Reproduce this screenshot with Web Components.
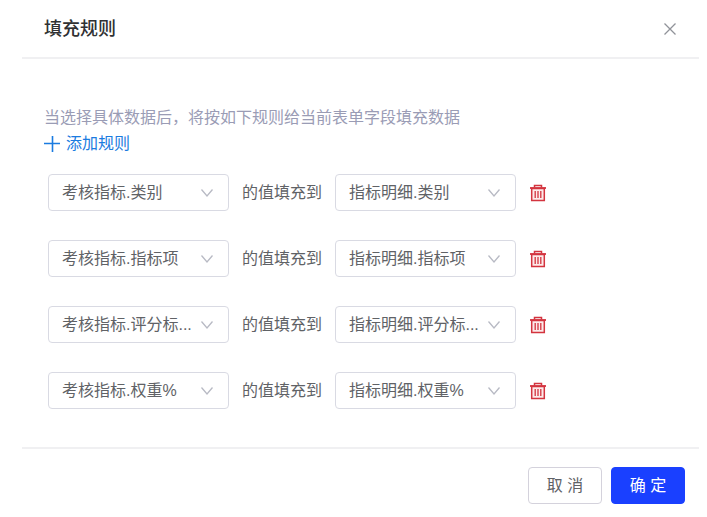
<!DOCTYPE html>
<html lang="zh-CN">
<head>
<meta charset="utf-8">
<meta name="viewport" content="width=device-width, initial-scale=1">
<title>填充规则</title>
<style>
body {
  margin: 0;
  background: #fff;
  color: #606266;
  font: 16px/24px "Liberation Sans", "Noto Sans CJK SC", sans-serif;
}
</style>
</head>
<body>
<fill-dialog>
  <span slot="title">填充规则</span>
  <rule-list>
    <span slot="hint">当选择具体数据后，将按如下规则给当前表单字段填充数据</span>
    <fill-rule from="考核指标.类别" to="指标明细.类别"></fill-rule>
    <fill-rule from="考核指标.指标项" to="指标明细.指标项"></fill-rule>
    <fill-rule from="考核指标.评分标..." to="指标明细.评分标..."></fill-rule>
    <fill-rule from="考核指标.权重%" to="指标明细.权重%"></fill-rule>
  </rule-list>
  <dialog-button slot="footer">取 消</dialog-button>
  <dialog-button slot="footer" primary>确 定</dialog-button>
</fill-dialog>

<script>
// parse each template once and clone it per element
const makeTemplate = (style, html) => {
  const tmpl = document.createElement("template");
  tmpl.innerHTML = `<style>${style}</style>${html}`;
  return tmpl;
};

const dialogTmpl = makeTemplate(
  `
:host {
  display: block;
  margin: 0 8px 0 22px;
}

header {
  display: flex;
  align-items: center;
  justify-content: space-between;
  height: 57px;
  padding: 0 22px;
  border-bottom: 2px solid #f0f0f2;
}

h1 {
  margin: 0;
  color: #303133;
  font-size: 18px;
  line-height: 24px;
  font-weight: 500;
}

.close {
  display: flex;
  padding: 0;
  border: 0;
  background: none;
  color: #909399;
  cursor: pointer;
}

main {
  padding: 47px 22px 38px;
}

footer {
  display: flex;
  justify-content: flex-end;
  gap: 9px;
  padding: 18px 14px 12px;
  border-top: 2px solid #f0f0f2;
}
`,
  `
<header>
  <h1><slot name="title"></slot></h1>
  <button class="close" type="button" aria-label="关闭">
    <svg width="14" height="14" viewBox="0 0 14 14" fill="none" stroke="currentColor" stroke-width="1.3"><path d="M1.5 1.5l11 11M12.5 1.5l-11 11"/></svg>
  </button>
</header>
<main><slot></slot></main>
<footer><slot name="footer"></slot></footer>
`
);

class FillDialog extends HTMLElement {
  constructor() {
    super();
    this.attachShadow({ mode: "open" }).appendChild(
      dialogTmpl.content.cloneNode(true)
    );
    this.shadowRoot
      .querySelector(".close")
      .addEventListener("click", () => this.remove());
  }
}

const listTmpl = makeTemplate(
  `
:host {
  display: block;
}

p {
  margin: 0;
  color: #9a9cb5;
  line-height: 24px;
}

.add {
  display: flex;
  align-items: center;
  gap: 6px;
  height: 28px;
  padding: 0;
  border: 0;
  background: none;
  color: #1a7be0;
  font: inherit;
  cursor: pointer;
}

.rules {
  display: flex;
  flex-direction: column;
  gap: 29px;
  padding: 16px 4px 0;
}
`,
  `
<p><slot name="hint"></slot></p>
<button class="add" type="button">
  <svg width="16" height="16" viewBox="0 0 16 16" fill="none" stroke="currentColor" stroke-width="1.6" aria-hidden="true"><path d="M0 7.5h16M8.5 0v16"/></svg>
  <span>添加规则</span>
</button>
<div class="rules"><slot></slot></div>
`
);

class RuleList extends HTMLElement {
  constructor() {
    super();
    this.attachShadow({ mode: "open" }).appendChild(
      listTmpl.content.cloneNode(true)
    );
    this.shadowRoot.querySelector(".add").addEventListener("click", () => {
      const last = this.querySelector("fill-rule:last-of-type");
      if (last) {
        last.after(last.cloneNode(true));
      }
    });
  }
}

const ruleTmpl = makeTemplate(
  `
:host {
  display: flex;
  align-items: center;
  gap: 13px;
}

.field {
  display: grid;
  align-items: center;
  flex: 0 1 181px;
  min-width: 0;
}

.field > * {
  grid-area: 1 / 1;
}

select {
  appearance: none;
  box-sizing: border-box;
  width: 100%;
  height: 37px;
  margin: 0;
  padding: 0 24px 0 13px;
  border: 1px solid #d9dae3;
  border-radius: 4px;
  background: #fff;
  color: inherit;
  font: inherit;
}

.arrow {
  justify-self: end;
  margin-right: 15px;
  color: #b8bac4;
  pointer-events: none;
}

.text {
  white-space: nowrap;
}

.remove {
  display: flex;
  padding: 0;
  border: 0;
  background: none;
  color: #d3343f;
  cursor: pointer;
}
`,
  `
<div class="field">
  <select id="from" aria-label="来源字段"></select>
  <svg class="arrow" width="14" height="10" viewBox="0 0 14 10" fill="none" stroke="currentColor" stroke-width="1.3"><path d="M1.5 1.5L7 8l5.5-6.5"/></svg>
</div>
<span class="text">的值填充到</span>
<div class="field">
  <select id="to" aria-label="目标字段"></select>
  <svg class="arrow" width="14" height="10" viewBox="0 0 14 10" fill="none" stroke="currentColor" stroke-width="1.3"><path d="M1.5 1.5L7 8l5.5-6.5"/></svg>
</div>
<button class="remove" type="button" aria-label="删除">
  <svg width="18" height="18" viewBox="0 0 18 18" fill="none" stroke="currentColor">
    <path d="M2.7 4.5h12.6v12H2.7z" fill="#fdeaea" stroke-width="1.5"/>
    <path d="M1 4h16" stroke-width="1.8"/>
    <path d="M5.5 3.5V1.5h7v2" stroke-width="1.5"/>
    <path d="M6.2 7v7M9 7v7M11.8 7v7" stroke-width="1.3"/>
  </svg>
</button>
`
);

class FillRule extends HTMLElement {
  constructor() {
    super();
    this.attachShadow({ mode: "open" }).appendChild(
      ruleTmpl.content.cloneNode(true)
    );
    this.shadowRoot
      .querySelector(".remove")
      .addEventListener("click", () => this.remove());
  }

  static get observedAttributes() {
    return ["from", "to"];
  }

  attributeChangedCallback(name, _oldValue, newValue) {
    this.shadowRoot.getElementById(name).replaceChildren(new Option(newValue));
  }
}

const buttonTmpl = makeTemplate(
  `
:host {
  display: block;
}

button {
  min-width: 74px;
  height: 37px;
  padding: 0 16px;
  border: 1px solid #d4d2dc;
  border-radius: 4px;
  background: #fff;
  color: inherit;
  font: inherit;
  cursor: pointer;
}

:host([primary]) button {
  border-color: #1a40ff;
  background: #1a40ff;
  color: #fff;
}
`,
  `<button type="button"><slot></slot></button>`
);

class DialogButton extends HTMLElement {
  constructor() {
    super();
    this.attachShadow({ mode: "open" }).appendChild(
      buttonTmpl.content.cloneNode(true)
    );
  }
}

customElements.define("fill-dialog", FillDialog);
customElements.define("rule-list", RuleList);
customElements.define("fill-rule", FillRule);
customElements.define("dialog-button", DialogButton);
</script>
</body>
</html>
